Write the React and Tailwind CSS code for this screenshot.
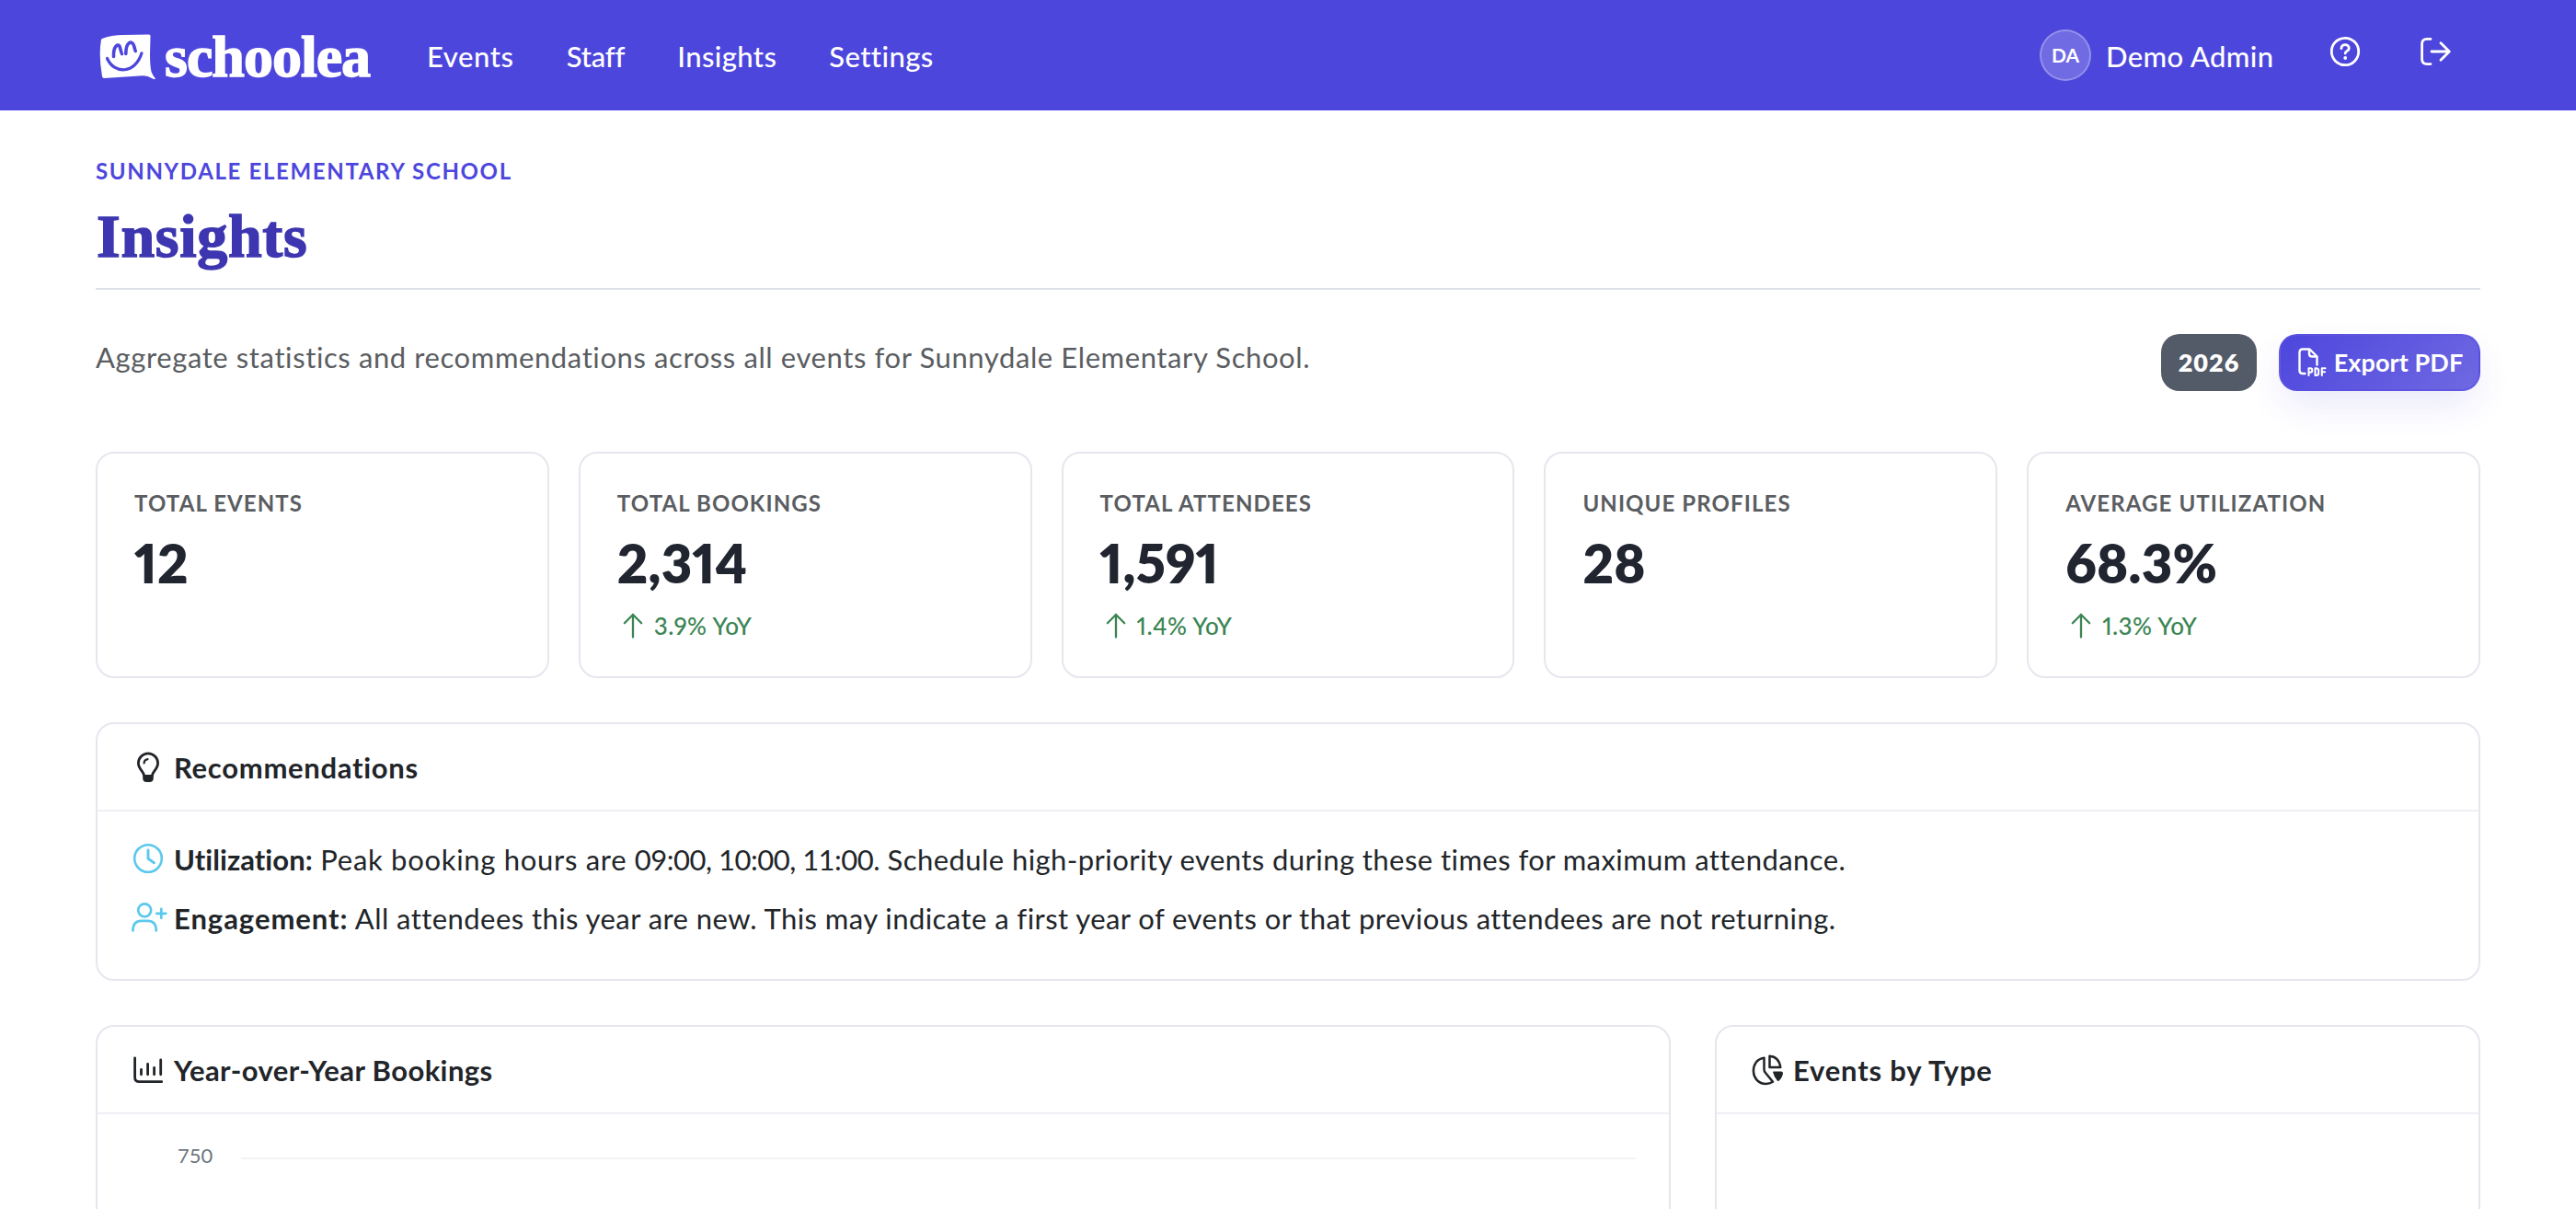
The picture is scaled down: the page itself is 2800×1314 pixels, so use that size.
import React from 'react';

const NAV_LINKS = [
  { label: 'Events', className: 'tracking-[0.6px]' },
  { label: 'Staff', className: 'tracking-[-0.2px]' },
  { label: 'Insights', className: 'tracking-[0.4px]' },
  { label: 'Settings', className: 'tracking-[0.4px]' },
];

const STATS = [
  { label: 'Total Events', value: '12' },
  { label: 'Total Bookings', value: '2,314', change: '3.9%' },
  { label: 'Total Attendees', value: '1,591', change: '1.4%' },
  { label: 'Unique Profiles', value: '28' },
  { label: 'Average Utilization', value: '68.3%', change: '1.3%' },
];

const stroke = { fill: 'none', stroke: 'currentColor', strokeLinecap: 'round', strokeLinejoin: 'round' };

function LogoMark() {
  return (
    <svg className="w-[62px] h-[50px]" viewBox="0 0 62 50">
      <path d="M3 5 Q13 1.2 26 1 L54 .5 Q55.500 .5 55.500 2 L55 22 Q55 34 56.500 41 Q58 45 61 48.500 Q60.500 49.500 58 48.500 Q52 45 47 45.300 L5 48 Q3.500 48 3 46 Q-1 23 2 6 Z" fill="#fff" />
      <path d="M8.500 26.500 C16 44 39 43.500 46 20.800" {...stroke} stroke="#4d46dd" strokeWidth="3.200" />
      <path d="M15.500 24.500 C15 12 21.500 9 22.500 15 C23.500 18.500 24 21 24.500 21.500" {...stroke} stroke="#4d46dd" strokeWidth="3.600" />
      <path d="M28.800 21.500 C28.800 8 35.500 6.500 37.500 12.500 C38.500 15.500 38.500 17 39.300 18.500" {...stroke} stroke="#4d46dd" strokeWidth="3.600" />
    </svg>
  );
}

function HelpIcon() {
  return (
    <svg className="w-[34px] h-[34px]" viewBox="0 0 34 34" {...stroke} strokeWidth="2.800">
      <circle cx="17" cy="17" r="14.700" />
      <path d="M12.900 13.700 C12.900 8.300 21.300 8.300 21.300 13.400 C21.300 16.300 17.200 16.300 17.200 19" />
      <circle cx="17.200" cy="24" r="1.900" fill="currentColor" stroke="none" />
    </svg>
  );
}

function LogoutIcon() {
  return (
    <svg className="w-[34px] h-[34px]" viewBox="0 0 34 34" {...stroke} strokeWidth="2.800">
      <path d="M12 3.400 H8 Q2.600 3.400 2.600 8.500 V25.500 Q2.600 30.600 8 30.600 H12" />
      <path d="M13 17 H32 M23 7.800 L32.300 17 L23 26.200" />
    </svg>
  );
}

function PdfIcon() {
  return (
    <svg className="w-[32px] h-[32px] ml-px" viewBox="0 0 32 32">
      <path d="M8.500 28 H6 Q2.500 28 2.500 24.500 V5 Q2.500 1.500 6 1.500 H13.500 L21.500 9.500 V18.500 M13 1.500 V6.500 Q13 9.500 16 9.500 H21.500" {...stroke} strokeWidth="2.400" />
      <path d="M12.500 30 V22.300 H14.300 Q16.300 22.300 16.300 24.500 Q16.300 26.700 14.300 26.700 H12.500 M19.500 22.300 V30 H20.500 Q23.200 30 23.200 27.500 V24.800 Q23.200 22.300 20.500 22.300 Z M26.800 30 V22.300 H30.500 M26.800 26.200 H30" {...stroke} strokeWidth="2.100" />
    </svg>
  );
}

function ArrowUpIcon() {
  return (
    <svg className="w-[28px] h-[28px]" viewBox="0 0 28 28" {...stroke} strokeWidth="2.300">
      <path d="M14 26.500 V2 M4.800 11.300 L14 2 L23.200 11.300" />
    </svg>
  );
}

function BulbIcon() {
  return (
    <svg className="w-[38px] h-[34px]" viewBox="0 0 38 34">
      <path d="M14.500 25.500 C14 21.500 8.400 18.500 8.400 12.500 A10.600 10.600 0 0 1 29.600 12.500 C29.600 18.500 24 21.500 23.500 25.500" {...stroke} strokeWidth="2.800" />
      <path d="M13.200 25 H24.800 V28.500 Q24.800 33 20.500 33 H17.500 Q13.200 33 13.200 28.500 Z" fill="currentColor" />
      <path d="M14.600 12.500 Q14.600 9 18.500 8.200" {...stroke} strokeWidth="2.200" />
    </svg>
  );
}

function ClockIcon() {
  return (
    <svg className="w-[38px] h-[34px] mb-0.5 text-[#5bc8ee]" viewBox="0 0 38 34" {...stroke} strokeWidth="2.600">
      <circle cx="19" cy="17" r="14.800" />
      <path d="M19 8 V17.300 L25.500 21.700" strokeWidth="2.900" />
    </svg>
  );
}

function UserPlusIcon() {
  return (
    <svg className="w-[40px] h-[34px] mb-0.5 -mr-0.5 text-[#5bc8ee]" viewBox="0 0 40 34" {...stroke} strokeWidth="2.700">
      <circle cx="15.200" cy="9.300" r="7" />
      <path d="M2.500 31.500 Q2.500 20.800 11.500 20.800 H18.500 Q27.800 20.800 27.800 31.500" />
      <path d="M33.300 7.800 V17.800 M28.300 12.800 H38.300" />
    </svg>
  );
}

function BarChartIcon() {
  return (
    <svg className="w-[38px] h-[34px]" viewBox="0 0 38 34" {...stroke} strokeWidth="2.800">
      <path d="M4.600 4 V25 Q4.600 29.700 9.500 29.700 H33.700 M11.500 16.300 V21.800 M18.600 10.300 V21.800 M25.600 14.300 V21.800 M32.700 6 V21.800" />
    </svg>
  );
}

function PieChartIcon() {
  return (
    <svg className="w-[38px] h-[34px]" viewBox="0 0 38 34">
      <path d="M15.500 3.800 C-1 6 .500 32 17.500 32 Q21.500 32 25 29.800 L17 20 Q15.500 18.300 15.500 16 Z" {...stroke} strokeWidth="2.500" />
      <path d="M21.500 1.800 Q31.500 2.500 33.300 14 H21.500 Z" {...stroke} strokeWidth="2.500" />
      <path d="M25 19 Q25 18.500 26 18.500 H34 Q36 18.500 36 20.500 Q35.300 25.500 31.500 28.800 Q30.500 29.300 29.800 28.500 Q26.500 25 25 19 Z" fill="currentColor" />
    </svg>
  );
}

function Navbar() {
  return (
    <nav className="h-[120px] bg-[#4d46dd] text-white flex items-center justify-between pl-[108px] pr-[136px]">
      <div className="flex items-center">
        <div className="flex items-center gap-[9px] h-[62px] pt-1">
          <LogoMark />
          <span className="w-[226px] whitespace-nowrap font-['Liberation_Serif',serif] font-bold text-[64px] leading-[64px] tracking-[-1px] [-webkit-text-stroke:1.500px_white] -mt-px">schoolea</span>
        </div>
        <div className="flex items-center gap-[57px] ml-[59px] pt-0.5 text-[31px] font-medium">
          {NAV_LINKS.map((link) => (
            <a key={link.label} href="#" className={link.className}>{link.label}</a>
          ))}
        </div>
      </div>

      <div className="flex items-center">
        <span className="w-14 h-14 rounded-full bg-white/20 border-2 border-white/25 flex items-center justify-center text-[21px] font-bold">DA</span>
        <span className="ml-4 w-[184px] pt-0.5 whitespace-nowrap text-[31px] font-medium tracking-[0.4px]">Demo Admin</span>
        <a href="#" className="ml-[59px] mb-[8px]"><HelpIcon /></a>
        <a href="#" className="ml-[64px] mb-[8px]"><LogoutIcon /></a>
      </div>
    </nav>
  );
}

function StatCard({ label, value, change }) {
  return (
    <div className="h-[246px] bg-white border-2 border-[#e6e6ee] rounded-[20px] pt-9 px-10">
      <div className="text-2xl leading-9 font-bold uppercase tracking-[1.1px] text-[#5a5d61]">{label}</div>
      <div className="mt-[11px] text-[58px] leading-[72px] font-extrabold proportional-nums tracking-[0.2px] text-[#212530]">{value}</div>
      {change && (
        <div className="mt-[14px] ml-[3px] flex items-center gap-[9px] text-[26px] leading-9 text-[#3b8554]">
          <ArrowUpIcon />
          <span className="font-medium proportional-nums tracking-[0.4px]">{change} YoY</span>
        </div>
      )}
    </div>
  );
}

function Panel({ icon, title, titleClass, className, children }) {
  return (
    <section className={`bg-white border-2 border-[#e6e6ee] rounded-[20px] ${className}`}>
      <div className="h-[95px] border-b-2 border-[#efeff5] pl-9 flex items-center gap-[9px]">
        {icon}
        <h2 className={`pt-px text-[31px] font-bold ${titleClass}`}>{title}</h2>
      </div>
      {children}
    </section>
  );
}

export default function App() {
  return (
    <div className="h-[1314px] overflow-hidden bg-white text-[#212529] font-[Lato,sans-serif]">
      <Navbar />

      <main className="px-[104px] pt-12">
        {/* Page heading */}
        <header className="border-b-2 border-[#dee2e6] pb-5">
          <div className="text-2xl leading-9 font-bold uppercase tracking-[1.65px] text-[#4d46dd]">Sunnydale Elementary School</div>
          <h1 className="mt-[17px] ml-px font-['Liberation_Serif',serif] font-bold text-[66px] leading-[72px] tracking-[0.7px] text-[#3d36b0] [-webkit-text-stroke:1.500px_#3d36b0]">Insights</h1>
        </header>

        <div className="mt-12 flex items-start justify-between">
          <p className="pt-px text-[31px] leading-[48px] tracking-[0.6px] text-[#5a5d61]">
            Aggregate statistics and recommendations across all events for Sunnydale Elementary School.
          </p>
          <div className="flex gap-6 text-[27px] font-bold text-white">
            <button className="w-[104px] h-[62px] pt-px rounded-[20px] bg-[#545b68] font-extrabold tracking-[1px]">2026</button>
            <button className="w-[219px] h-[62px] rounded-[20px] border-2 border-[#5b53e0]/60 bg-linear-[135deg,#4d46dd,#7069e2] shadow-[0_18px_40px_-6px_rgba(79,70,224,0.14)] flex items-center justify-center gap-[8px] whitespace-nowrap">
              <PdfIcon />
              <span className="pt-px tracking-[0.1px]">Export PDF</span>
            </button>
          </div>
        </div>

        {/* Summary numbers */}
        <div className="mt-[66px] grid grid-cols-5 gap-8">
          {STATS.map((stat) => (
            <StatCard key={stat.label} {...stat} />
          ))}
        </div>

        <Panel className="mt-12 h-[281px]" icon={<BulbIcon />} title="Recommendations" titleClass="tracking-[0.7px]">
          <ul className="pt-7 pl-9 space-y-4 text-[31px] leading-[48px] tracking-[0.44px]">
            <li className="flex items-center gap-[9px]">
              <ClockIcon />
              <span>
                <strong className="tracking-[0.05px]">Utilization:</strong>
                <span className="tracking-[0.7px]"> Peak booking hours are </span>
                <span className="tracking-[-0.5px]">09:00, 10:00, 11:00.</span> Schedule high-priority events during these times for maximum attendance.
              </span>
            </li>
            <li className="flex items-center gap-[9px]">
              <UserPlusIcon />
              <span><strong className="tracking-[0.95px]">Engagement:</strong> All attendees this year are new. This may indicate a first year of events or that previous attendees are not returning.</span>
            </li>
          </ul>
        </Panel>

        <div className="mt-12 grid grid-cols-[1712px_832px] gap-12">
          <Panel className="h-[600px]" icon={<BarChartIcon />} title="Year-over-Year Bookings" titleClass="tracking-[0.4px]">
            <div className="pt-[27px] pl-[87px] pr-9 flex items-center">
              <span className="w-[69px] text-[22px] leading-9 text-[#6c757d]">750</span>
              <div className="flex-1 h-0.5 mt-[6px] bg-[#f3f3f5]"></div>
            </div>
          </Panel>
          <Panel className="h-[600px]" icon={<PieChartIcon />} title="Events by Type" titleClass="tracking-[0.8px]" />
        </div>
      </main>
    </div>
  );
}
